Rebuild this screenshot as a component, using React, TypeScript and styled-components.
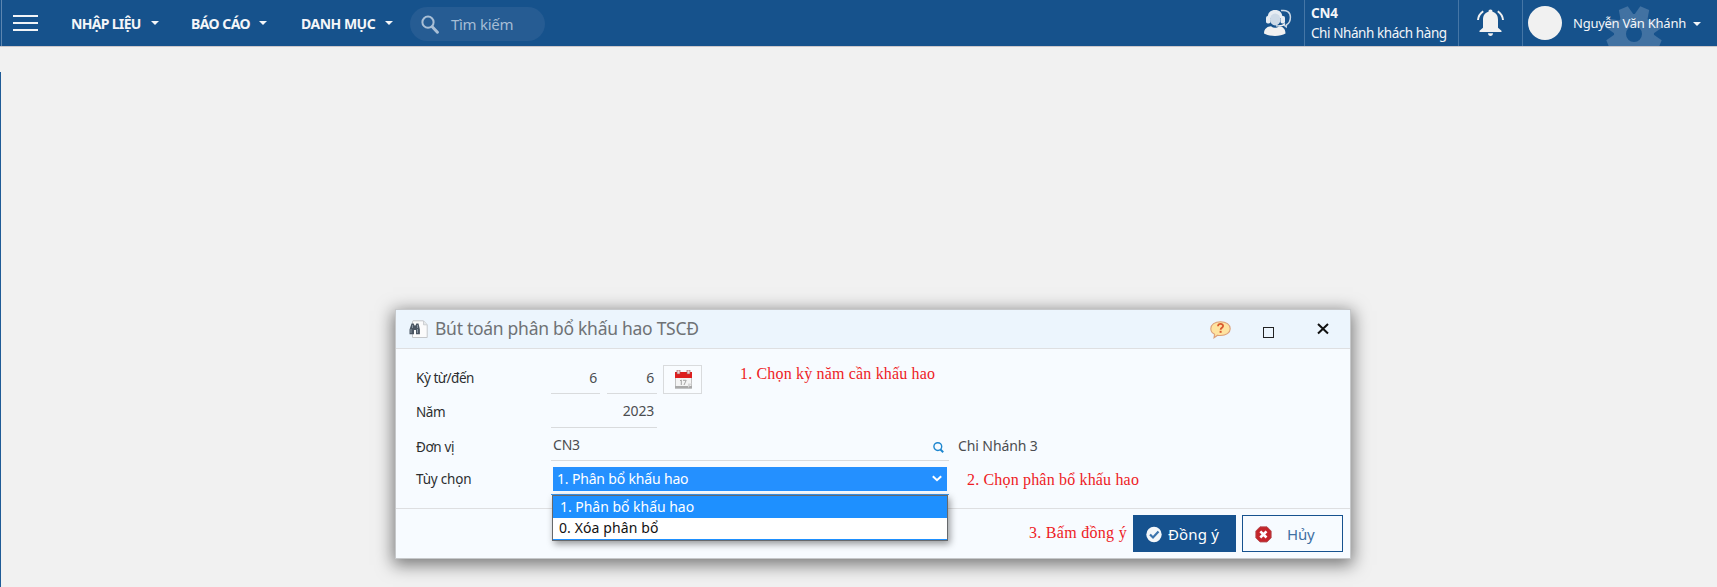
import React from "react";
import styled, { createGlobalStyle, css } from "styled-components";

const sans = `"Noto Sans", "Open Sans", sans-serif`;
const serif = `"Liberation Serif", "Times New Roman", serif`;

const GlobalStyle = createGlobalStyle`
  *, *::before, *::after { box-sizing: border-box; }
  html, body { margin: 0; height: 100%; }
  body { background: #f1f1f1; font-family: ${sans}; overflow: hidden; }
  #root { height: 100%; }
  svg { display: block; flex: none; }
  button, input { font-family: inherit; }
`;

const Page = styled.div`
  display: flex;
  flex-direction: column;
  height: 100vh;
  width: 100%;
`;

/* ---------- top bar ---------- */

const TopBar = styled.header`
  flex: none;
  display: flex;
  height: 47px;
  background: #16528c;
  border-bottom: 1px solid #ccc8cb;
  color: #f4f6f9;
  overflow: hidden;
`;

const NavSide = styled.nav`
  display: flex;
  align-items: flex-start;
  flex: 1;
  margin-left: 1px;
  border-left: 1px solid #5d86b0;
`;

const MenuToggle = styled.button`
  display: flex;
  flex-direction: column;
  gap: 5px;
  width: 25px;
  margin: 15px 33px 0 11px;
  padding: 0;
  border: 0;
  background: none;
`;

const ToggleBar = styled.span`
  height: 2px;
  background: #f1f4f7;
`;

const NavItem = styled.a<{ $width: number; $spacing: number }>`
  display: flex;
  align-items: flex-start;
  width: ${(p) => p.$width}px;
  height: 46px;
  padding-top: 14px;
  font-size: 14px;
  font-weight: 700;
  line-height: 20px;
  letter-spacing: ${(p) => p.$spacing}px;
  white-space: nowrap;
`;

const Caret = styled.span<{ $gap: number; $top?: number }>`
  flex: none;
  margin: ${(p) => p.$top ?? 7}px 0 0 ${(p) => p.$gap}px;
  border: 4px solid transparent;
  border-top-color: #f4f6f9;
  border-bottom: 0;
`;

const SearchBox = styled.div`
  display: flex;
  align-items: center;
  gap: 12px;
  width: 135px;
  height: 34px;
  margin-top: 7px;
  padding: 0 11px;
  border-radius: 17px;
  background: #265c93;
  color: #a5bdd5;
  font-size: 15px;
  letter-spacing: -0.3px;
  line-height: 20px;
  white-space: nowrap;
`;

const UserSide = styled.div`
  display: flex;
`;

const BarCell = styled.div<{ $width: number; $pad: number }>`
  display: flex;
  align-items: flex-start;
  width: ${(p) => p.$width}px;
  height: 46px;
  padding: 0 0 0 ${(p) => p.$pad}px;
  border-right: 1px solid #4576a6;
  &:last-child { border-right: 0; }
`;

const Branch = styled.div`
  display: flex;
  flex-direction: column;
  padding-top: 3px;
  font-size: 13.5px;
  line-height: 20px;
  letter-spacing: -0.43px;
  white-space: nowrap;
`;

const BranchCode = styled.strong`
  letter-spacing: -0.2px;
`;

const Avatar = styled.span`
  width: 34px;
  height: 34px;
  margin-top: 6px;
  border-radius: 50%;
  background: #f1f1f1;
`;

const UserName = styled.div`
  position: relative;
  display: flex;
  margin: 13px 0 0 11px;
  font-size: 13px;
  line-height: 20px;
  letter-spacing: -0.25px;
  white-space: nowrap;
`;

const UserText = styled.span`
  position: relative;
  width: 115px;
`;

const GearBackdrop = styled.svg`
  position: absolute;
  left: 33px;
  top: -7px;
`;

/* ---------- dialog ---------- */

const Workspace = styled.main`
  flex: 1;
  display: flex;
  align-items: flex-start;
  margin-top: 25px;
  border-left: 1px solid #1f5b97;
`;

const Dialog = styled.section`
  display: flex;
  flex-direction: column;
  width: 956px;
  height: 250px;
  margin: 237px 0 0 394px;
  border: 1px solid #c6c8ca;
  background: #f7fbff;
  box-shadow: 0 4px 16px 2px rgba(0, 0, 0, 0.5);
`;

const TitleBar = styled.header`
  flex: none;
  display: flex;
  height: 39px;
  padding: 0 21px 0 13px;
  border-bottom: 1px solid #dedfe1;
  background: #ecf5fd;
`;

const Title = styled.h1`
  flex: 1;
  margin: 4px 0 0 7px;
  color: #6f7275;
  font-size: 17.5px;
  font-weight: 400;
  line-height: 28px;
  letter-spacing: -0.28px;
`;

const WindowButton = styled.button<{ $gap: number; $top: number }>`
  align-self: flex-start;
  margin: ${(p) => p.$top}px 0 0 ${(p) => p.$gap}px;
  padding: 0;
  border: 0;
  background: none;
`;

const Form = styled.div`
  flex: none;
  height: 160px;
  padding: 11px 0 0 20px;
  border-bottom: 1px solid #dedfe1;
`;

const Row = styled.div<{ $height?: number }>`
  display: flex;
  height: ${(p) => p.$height ?? 34}px;
`;

const Label = styled.label<{ $top: number; $spacing?: number }>`
  width: 135px;
  padding-top: ${(p) => p.$top}px;
  color: #2c2e30;
  font-size: 13.5px;
  line-height: 20px;
  letter-spacing: ${(p) => p.$spacing ?? -0.4}px;
`;

const Field = styled.div<{ $width: number; $right?: boolean; $gap?: number; $top?: number }>`
  display: flex;
  justify-content: ${(p) => (p.$right ? "flex-end" : "space-between")};
  width: ${(p) => p.$width}px;
  height: 100%;
  margin-left: ${(p) => p.$gap ?? 0}px;
  padding: ${(p) => p.$top ?? 7}px 3px 0 2px;
  border-bottom: 1px solid #d9dbdd;
  color: #4b4d50;
  font-size: 14px;
  line-height: 20px;
  letter-spacing: -0.2px;
`;

const CalendarButton = styled.button`
  display: flex;
  justify-content: center;
  width: 39px;
  height: 29px;
  margin: 5px 0 0 6px;
  padding: 4px 0 0 1px;
  border: 1px solid #d9dbdd;
  background: #f9fcff;
`;

const Note = styled.span<{ $left: number; $top: number; $spacing?: number }>`
  margin: ${(p) => p.$top}px 0 0 ${(p) => p.$left}px;
  color: #ee1c25;
  font-family: ${serif};
  font-size: 16px;
  line-height: 20px;
  letter-spacing: ${(p) => p.$spacing ?? 0.17}px;
  white-space: nowrap;
`;

const FieldText = styled.span`
  margin: 8px 0 0 9px;
  color: #4b4d50;
  font-size: 14px;
  line-height: 20px;
  letter-spacing: -0.1px;
`;

const SelectField = styled.div`
  position: relative;
  width: 398px;
  height: 34px;
  padding: 6px 2px 0;
  border-bottom: 1px solid #3b97ee;
`;

const SelectValue = styled.div`
  display: flex;
  justify-content: space-between;
  height: 24px;
  padding: 1px 5px 0 4px;
  background: #2490ff;
  color: #fff;
  font-size: 14px;
  line-height: 22px;
  letter-spacing: -0.17px;
`;

const OptionList = styled.ul`
  position: absolute;
  z-index: 2;
  left: 1px;
  top: 34px;
  width: 396px;
  height: 46px;
  margin: 0;
  padding: 0;
  list-style: none;
  border: 1px solid #66696c;
  background: #fff;
  box-shadow: 2px 3px 7px rgba(0, 0, 0, 0.4);
`;

const Option = styled.li<{ $active?: boolean }>`
  height: 22px;
  padding-left: 7px;
  font-size: 14px;
  line-height: 22px;
  letter-spacing: -0.03px;
  ${(p) =>
    p.$active
      ? css`
          background: #1e90ff;
          color: #fff;
        `
      : css`
          padding-left: 6px;
          border-bottom: 1px solid #1e90ff;
          line-height: 20px;
          letter-spacing: 0.1px;
          color: #111;
        `}
`;

const Footer = styled.footer`
  display: flex;
  justify-content: flex-end;
  padding: 6px 7px 0 0;
`;

const ActionButton = styled.button<{ $primary?: boolean; $width: number }>`
  display: flex;
  align-items: flex-start;
  gap: ${(p) => (p.$primary ? 6 : 15)}px;
  width: ${(p) => p.$width}px;
  height: 37px;
  margin-left: 6px;
  padding: 10px 0 0 12px;
  border: 1px solid #16528f;
  background: ${(p) => (p.$primary ? "#16528f" : "#f7fbff")};
  color: ${(p) => (p.$primary ? "#fff" : "#3f70a3")};
  font-size: 15px;
  line-height: 17px;
  letter-spacing: ${(p) => (p.$primary ? 0.15 : -0.2)}px;
`;

/* ---------- icons ---------- */

const SearchIcon = () => (
  <svg width="18" height="19" viewBox="0 0 18 19" fill="none" stroke="#a9bfd6">
    <circle cx="7" cy="7.2" r="5.6" strokeWidth="2" />
    <path d="M11.2 11.8l5.2 5.4" strokeWidth="3" strokeLinecap="round" />
  </svg>
);

const SupportIcon = () => (
  <svg width="28" height="28" viewBox="0 0 28 28">
    <path d="M17 1.6c5.5-.9 9.4 1.4 9.4 6.4 0 3.8-1.500 6.600-3.800 7.600l-.4 2.200-3-2.400" fill="none" stroke="#c9d7e5" strokeWidth="1.500" />
    <path d="M3.600 9C3.600 3.500 6.500 1 11 1s7.500 2.500 7.500 8z" fill="#e6ecf2" />
    <rect x="2" y="7" width="4.500" height="7.500" rx="1.800" fill="#e6ecf2" />
    <rect x="16.500" y="7" width="4.500" height="7.500" rx="1.800" fill="#e6ecf2" />
    <ellipse cx="11.200" cy="10.500" rx="5.200" ry="6" fill="#cddae7" />
    <path d="M21 14.500c-2 2.500-5 2.800-9 2.300" fill="none" stroke="#f1f1f1" strokeWidth="1.300" />
    <path d="M0 24.500c0-5 3.500-7 7-7.300 2.500 2 5.500 2 8 0 3.500.3 6.500 2.300 6.500 7.300-5 3.300-16 3.300-21.500 0z" fill="#f1f1f1" />
  </svg>
);

const BellIcon = () => (
  <svg width="27" height="28" viewBox="0 0 27 28" fill="#f1f1f1">
    <path d="M13.500 0.500c1.300 0 2 .9 2 2.200 4 1 5.500 4.300 5.500 8v8l3.500 3v1.300h-22v-1.300l3.500-3v-8c0-3.700 1.500-7 5.500-8 0-1.300.7-2.200 2-2.200z" />
    <path d="M11 24.300h5c0 1.500-1 2.700-2.500 2.700S11 25.800 11 24.300z" />
    <path d="M6.200 2.200C3.300 4.200 1.300 7.300 1 11M20.800 2.200c2.900 2 4.900 5.100 5.200 8.800" fill="none" stroke="#f1f1f1" strokeWidth="2" />
  </svg>
);

const teeth = [0, 45, 90, 135, 180, 225, 270, 315];

const Gear = () => (
  <GearBackdrop width="56" height="56" viewBox="-28 -28 56 56">
    <g fill="#4272a2">
      {teeth.map((a) => (
        <path key={a} d="M-7.500 -16L-4.800 -28H4.800L7.500 -16z" transform={`rotate(${a + 22.5})`} />
      ))}
    </g>
    <circle r="14" fill="none" stroke="#4272a2" strokeWidth="12" />
  </GearBackdrop>
);

const DocumentIcon = () => (
  <svg width="19" height="19" viewBox="0 0 19 19">
    <path d="M4 .8h10.500l3.700 4v12.700H3.500V1.500z" fill="#fbfbfb" stroke="#c4c7ca" />
    <path d="M14.500 1v3.800H18" fill="#e5e7e9" stroke="#c4c7ca" strokeWidth=".8" />
    <path d="M2.500 3.500h2.200l.8 2h1l.8-2h2.200l1.400 6v4.700H7V10H5v4.200H.5V9.500z" fill="#4b5663" />
    <path d="M2 9v4M8.500 9v4M3.500 5v3M8.500 5v3" stroke="#8793a0" />
  </svg>
);

const HelpIcon = () => (
  <svg width="21" height="18" viewBox="0 0 21 18">
    <path d="M10.500.7c5.600 0 9.700 2.900 9.700 7s-4.100 6.800-9.700 6.800c-1 0-2-.1-2.900-.3L4 16.800l.6-3.600C2.200 12 .8 10 .8 7.700.8 3.600 4.900.7 10.500.7z" fill="#fee3a0" stroke="#dca07a" strokeWidth="1.100" />
    <path d="M8 5.200c.2-3 5.200-2.900 5.100-.2 0 1.700-2.500 1.800-2.500 3.800" fill="none" stroke="#d9592f" strokeWidth="1.800" />
    <rect x="9.600" y="9.800" width="2" height="2" fill="#d9592f" />
  </svg>
);

const MaximizeIcon = () => (
  <svg width="12" height="12" viewBox="0 0 12 12">
    <rect x=".5" y=".5" width="10" height="10" fill="none" stroke="#222" />
  </svg>
);

const CloseIcon = () => (
  <svg width="12" height="12" viewBox="0 0 12 12">
    <path d="M1 1l10 9.500M11 1L1 10.500" stroke="#111" strokeWidth="2" />
  </svg>
);

const CalendarIcon = () => (
  <svg width="17" height="19" viewBox="0 0 17 19">
    <rect x=".5" y="3" width="16" height="15" fill="#f4f4f4" stroke="#b5b5b5" strokeWidth=".8" />
    <path d="M0 2h17v6H0z" fill="#de1d1d" />
    <path d="M0 16h17v2.500H0z" fill="#a9a9a9" />
    <path d="M2 0h3v4H2zM12 0h3v4h-3z" fill="#f0d5d5" stroke="#9c5050" strokeWidth=".6" />
    <path d="M5 10.800l1.300-.8v5M8 10.300h3.200L9 15" fill="none" stroke="#a4a4a4" />
    <path d="M13 13.500h4L13 18z" fill="#d7d7d7" />
  </svg>
);

const LookupIcon = () => (
  <svg width="11" height="11" viewBox="0 0 11 11" fill="none" stroke="#1d86cf">
    <circle cx="4.800" cy="4.600" r="3.900" strokeWidth="1.400" />
    <path d="M7.200 7.200l3 3" strokeWidth="2" />
  </svg>
);

const ChevronIcon = () => (
  <svg width="10" height="8" viewBox="0 0 10 8">
    <path d="M.8 1.200L5 5.200l4.200-4" fill="none" stroke="#fff" strokeWidth="2" />
  </svg>
);

const AcceptIcon = () => (
  <svg width="16" height="17" viewBox="0 0 16 17">
    <circle cx="8" cy="8.500" r="7.700" fill="#f4f7fa" />
    <path d="M4 8.500l3 3 5.500-6" fill="none" stroke="#3c74ad" strokeWidth="2.200" />
  </svg>
);

const CancelIcon = () => (
  <svg width="17" height="17" viewBox="0 0 17 17">
    <path d="M5 .8h7l4.200 4.300v6.800L12 16H5L.8 11.900V5.100z" fill="#c4252a" stroke="#b05055" strokeWidth=".8" />
    <path d="M5.300 5.300l6.200 6.200M11.500 5.300l-6.200 6.200" stroke="#fff" strokeWidth="2.600" />
  </svg>
);

const IconSlot = styled.span<{ $top: number; $right?: number }>`
  flex: none;
  align-self: flex-start;
  margin: ${(p) => p.$top}px ${(p) => p.$right ?? 0}px 0 0;
`;

export default function App() {
  return (
    <Page>
      <GlobalStyle />
      <TopBar>
        <NavSide>
          <MenuToggle>
            <ToggleBar />
            <ToggleBar />
            <ToggleBar />
          </MenuToggle>
          <NavItem $width={120} $spacing={-0.68}>NHẬP LIỆU<Caret $gap={10} /></NavItem>
          <NavItem $width={110} $spacing={-0.55}>BÁO CÁO<Caret $gap={9} /></NavItem>
          <NavItem $width={109} $spacing={-0.5}>DANH MỤC<Caret $gap={10} /></NavItem>
          <SearchBox><SearchIcon />Tìm kiếm</SearchBox>
        </NavSide>
        <UserSide>
          <BarCell $width={41} $pad={0}><IconSlot $top={9}><SupportIcon /></IconSlot></BarCell>
          <BarCell $width={154} $pad={6}>
            <Branch>
              <BranchCode>CN4</BranchCode>
              <span>Chi Nhánh khách hàng</span>
            </Branch>
          </BarCell>
          <BarCell $width={64} $pad={18}><IconSlot $top={9}><BellIcon /></IconSlot></BarCell>
          <BarCell $width={194} $pad={5}>
            <Avatar />
            <UserName>
              <Gear />
              <UserText>Nguyễn Văn Khánh</UserText>
              <Caret $gap={5} $top={9} />
            </UserName>
          </BarCell>
        </UserSide>
      </TopBar>

      <Workspace>
        <Dialog>
          <TitleBar>
            <IconSlot $top={10}><DocumentIcon /></IconSlot>
            <Title>Bút toán phân bổ khấu hao TSCĐ</Title>
            <WindowButton $gap={0} $top={11}><HelpIcon /></WindowButton>
            <WindowButton $gap={32} $top={17}><MaximizeIcon /></WindowButton>
            <WindowButton $gap={42} $top={13}><CloseIcon /></WindowButton>
          </TitleBar>

          <Form>
            <Row>
              <Label $top={8} $spacing={-0.45}>Kỳ từ/đến</Label>
              <Field $width={49} $top={8} $right>6</Field>
              <Field $width={50} $gap={7} $top={8} $right>6</Field>
              <CalendarButton><CalendarIcon /></CalendarButton>
              <Note $left={38} $top={4}>1. Chọn kỳ năm cần khấu hao</Note>
            </Row>
            <Row>
              <Label $top={8}>Năm</Label>
              <Field $width={106} $right>2023</Field>
            </Row>
            <Row $height={33}>
              <Label $top={9}>Đơn vị</Label>
              <Field $width={398}>
                CN3
                <IconSlot $top={7} $right={2}><LookupIcon /></IconSlot>
              </Field>
              <FieldText>Chi Nhánh 3</FieldText>
            </Row>
            <Row>
              <Label $top={8} $spacing={-0.2}>Tùy chọn</Label>
              <SelectField>
                <SelectValue>
                  1. Phân bổ khấu hao
                  <IconSlot $top={7}><ChevronIcon /></IconSlot>
                </SelectValue>
                <OptionList>
                  <Option $active>1. Phân bổ khấu hao</Option>
                  <Option>0. Xóa phân bổ</Option>
                </OptionList>
              </SelectField>
              <Note $left={18} $top={9}>2. Chọn phân bổ khấu hao</Note>
            </Row>
          </Form>

          <Footer>
            <Note $left={0} $top={8} $spacing={0.3}>3. Bấm đồng ý</Note>
            <ActionButton $primary $width={103}><AcceptIcon />Đồng ý</ActionButton>
            <ActionButton $width={101}><CancelIcon />Hủy</ActionButton>
          </Footer>
        </Dialog>
      </Workspace>
    </Page>
  );
}
